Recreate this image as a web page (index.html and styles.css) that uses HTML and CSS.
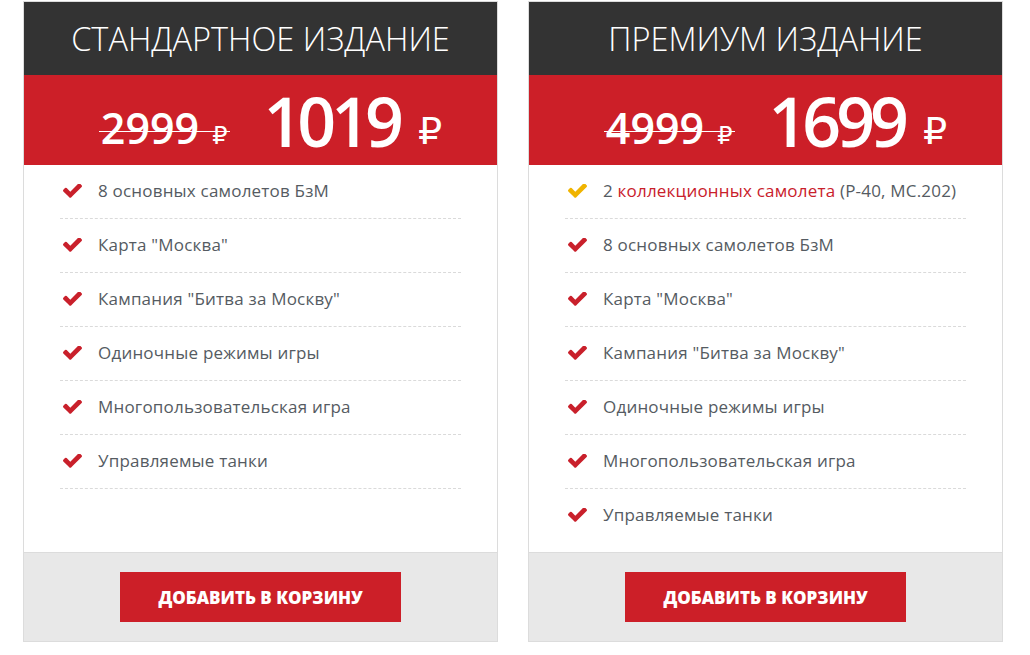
FILE: index.html
```html
<!DOCTYPE html>
<html lang="ru">
<head>
<meta charset="utf-8">
<title>Издания</title>
<link rel="stylesheet" href="styles.css">
</head>
<body>
<div class="wrap">
  <div class="card">
    <div class="card-title">СТАНДАРТНОЕ ИЗДАНИЕ</div>
    <div class="card-price">
      <span class="old"><span class="num">2999</span><span class="rub">₽</span></span><span class="new"><span class="num">1019</span><span class="rub">₽</span></span>
    </div>
    <ul class="features">
      <li><svg class="chk" viewBox="121 400 1550 1130"><path d="M1671 566q0 40-28 68l-724 724-136 136q-28 28-68 28t-68-28l-136-136-362-362q-28-28-28-68t28-68l136-136q28-28 68-28t68 28l294 295 656-657q28-28 68-28t68 28l136 136q28 28 28 68z"/></svg><span>8 основных самолетов БзМ</span></li>
      <li><svg class="chk" viewBox="121 400 1550 1130"><path d="M1671 566q0 40-28 68l-724 724-136 136q-28 28-68 28t-68-28l-136-136-362-362q-28-28-28-68t28-68l136-136q28-28 68-28t68 28l294 295 656-657q28-28 68-28t68 28l136 136q28 28 28 68z"/></svg><span>Карта "Москва"</span></li>
      <li><svg class="chk" viewBox="121 400 1550 1130"><path d="M1671 566q0 40-28 68l-724 724-136 136q-28 28-68 28t-68-28l-136-136-362-362q-28-28-28-68t28-68l136-136q28-28 68-28t68 28l294 295 656-657q28-28 68-28t68 28l136 136q28 28 28 68z"/></svg><span>Кампания "Битва за Москву"</span></li>
      <li><svg class="chk" viewBox="121 400 1550 1130"><path d="M1671 566q0 40-28 68l-724 724-136 136q-28 28-68 28t-68-28l-136-136-362-362q-28-28-28-68t28-68l136-136q28-28 68-28t68 28l294 295 656-657q28-28 68-28t68 28l136 136q28 28 28 68z"/></svg><span>Одиночные режимы игры</span></li>
      <li><svg class="chk" viewBox="121 400 1550 1130"><path d="M1671 566q0 40-28 68l-724 724-136 136q-28 28-68 28t-68-28l-136-136-362-362q-28-28-28-68t28-68l136-136q28-28 68-28t68 28l294 295 656-657q28-28 68-28t68 28l136 136q28 28 28 68z"/></svg><span>Многопользовательская игра</span></li>
      <li><svg class="chk" viewBox="121 400 1550 1130"><path d="M1671 566q0 40-28 68l-724 724-136 136q-28 28-68 28t-68-28l-136-136-362-362q-28-28-28-68t28-68l136-136q28-28 68-28t68 28l294 295 656-657q28-28 68-28t68 28l136 136q28 28 28 68z"/></svg><span>Управляемые танки</span></li>
    </ul>
    <div class="card-foot"><a class="btn" href="#">ДОБАВИТЬ В КОРЗИНУ</a></div>
  </div>
  <div class="card">
    <div class="card-title">ПРЕМИУМ ИЗДАНИЕ</div>
    <div class="card-price">
      <span class="old"><span class="num">4999</span><span class="rub">₽</span></span><span class="new"><span class="num">1699</span><span class="rub">₽</span></span>
    </div>
    <ul class="features">
      <li><svg class="chk gold" viewBox="121 400 1550 1130"><path d="M1671 566q0 40-28 68l-724 724-136 136q-28 28-68 28t-68-28l-136-136-362-362q-28-28-28-68t28-68l136-136q28-28 68-28t68 28l294 295 656-657q28-28 68-28t68 28l136 136q28 28 28 68z"/></svg><span>2 <a class="hl" href="#">коллекционных самолета</a> (P-40, MC.202)</span></li>
      <li><svg class="chk" viewBox="121 400 1550 1130"><path d="M1671 566q0 40-28 68l-724 724-136 136q-28 28-68 28t-68-28l-136-136-362-362q-28-28-28-68t28-68l136-136q28-28 68-28t68 28l294 295 656-657q28-28 68-28t68 28l136 136q28 28 28 68z"/></svg><span>8 основных самолетов БзМ</span></li>
      <li><svg class="chk" viewBox="121 400 1550 1130"><path d="M1671 566q0 40-28 68l-724 724-136 136q-28 28-68 28t-68-28l-136-136-362-362q-28-28-28-68t28-68l136-136q28-28 68-28t68 28l294 295 656-657q28-28 68-28t68 28l136 136q28 28 28 68z"/></svg><span>Карта "Москва"</span></li>
      <li><svg class="chk" viewBox="121 400 1550 1130"><path d="M1671 566q0 40-28 68l-724 724-136 136q-28 28-68 28t-68-28l-136-136-362-362q-28-28-28-68t28-68l136-136q28-28 68-28t68 28l294 295 656-657q28-28 68-28t68 28l136 136q28 28 28 68z"/></svg><span>Кампания "Битва за Москву"</span></li>
      <li><svg class="chk" viewBox="121 400 1550 1130"><path d="M1671 566q0 40-28 68l-724 724-136 136q-28 28-68 28t-68-28l-136-136-362-362q-28-28-28-68t28-68l136-136q28-28 68-28t68 28l294 295 656-657q28-28 68-28t68 28l136 136q28 28 28 68z"/></svg><span>Одиночные режимы игры</span></li>
      <li><svg class="chk" viewBox="121 400 1550 1130"><path d="M1671 566q0 40-28 68l-724 724-136 136q-28 28-68 28t-68-28l-136-136-362-362q-28-28-28-68t28-68l136-136q28-28 68-28t68 28l294 295 656-657q28-28 68-28t68 28l136 136q28 28 28 68z"/></svg><span>Многопользовательская игра</span></li>
      <li class="last"><svg class="chk" viewBox="121 400 1550 1130"><path d="M1671 566q0 40-28 68l-724 724-136 136q-28 28-68 28t-68-28l-136-136-362-362q-28-28-28-68t28-68l136-136q28-28 68-28t68 28l294 295 656-657q28-28 68-28t68 28l136 136q28 28 28 68z"/></svg><span>Управляемые танки</span></li>
    </ul>
    <div class="card-foot"><a class="btn" href="#">ДОБАВИТЬ В КОРЗИНУ</a></div>
  </div>
</div>
</body>
</html>
```

FILE: styles.css
```css
* { box-sizing: border-box; }
body {
  margin: 0;
  background: #fff;
  font-family: "Open Sans", "DejaVu Sans", sans-serif;
}
.wrap {
  display: flex;
  gap: 30px;
  padding: 1px 0 0 23px;
  align-items: stretch;
}
.card {
  width: 475px;
  border: 1px solid #dcdcdc;
  display: flex;
  flex-direction: column;
  background: #fff;
}
.card-title {
  background: #333333;
  color: #fff;
  height: 73px;
  display: flex;
  align-items: center;
  justify-content: center;
  font-weight: 300;
  font-size: 32.5px;
  padding-bottom: 1px;
}
.card-price {
  background: #cc1f28;
  color: #fff;
  height: 90px;
  text-align: center;
  padding: 12px 0 0 22px;
  line-height: 1;
  font-size: 0;
  white-space: nowrap;
}
.old {
  position: relative;
  display: inline-block;
  font-size: 43px;
  font-weight: 600;
  vertical-align: 3px;
  margin-right: 36px;
}
.old::after {
  content: "";
  position: absolute;
  left: -2px;
  right: -3px;
  top: 58%;
  height: 1px;
  background: #fff;
}
.old .rub { font-size: 24px; font-weight: 400; margin-left: 13px; }
.new {
  font-size: 68px;
  font-weight: 600;
}
.new .num { letter-spacing: -5px; }
.new .rub { font-size: 38px; font-weight: 400; margin-left: 19px; vertical-align: 3px; }
.features {
  list-style: none;
  margin: 0 36px;
  padding: 0 0 10px;
  flex: 1;
}
.features li {
  display: flex;
  align-items: center;
  padding: 15px 0 16px;
  line-height: 22px;
  border-bottom: 1px dashed #dadada;
  font-size: 17px;
  letter-spacing: 0.2px;
  color: #555b62;
}
.features li.last { border-bottom: none; }
.chk {
  width: 19px;
  height: 14px;
  fill: #c9202b;
  margin: 0 16px 0 3px;
  flex: none;
}
.chk.gold { fill: #f0b400; }
.hl { color: #c9202b; text-decoration: none; }
.card-foot {
  background: #e8e8e8;
  border-top: 1px solid #dcdcdc;
  height: 89px;
  display: flex;
  justify-content: center;
  padding-top: 19px;
}
.btn {
  display: flex;
  align-items: center;
  justify-content: center;
  width: 281px;
  height: 50px;
  background: #cc1f28;
  color: #fff;
  font-weight: 800;
  font-size: 17px;
  text-decoration: none;
}
```
